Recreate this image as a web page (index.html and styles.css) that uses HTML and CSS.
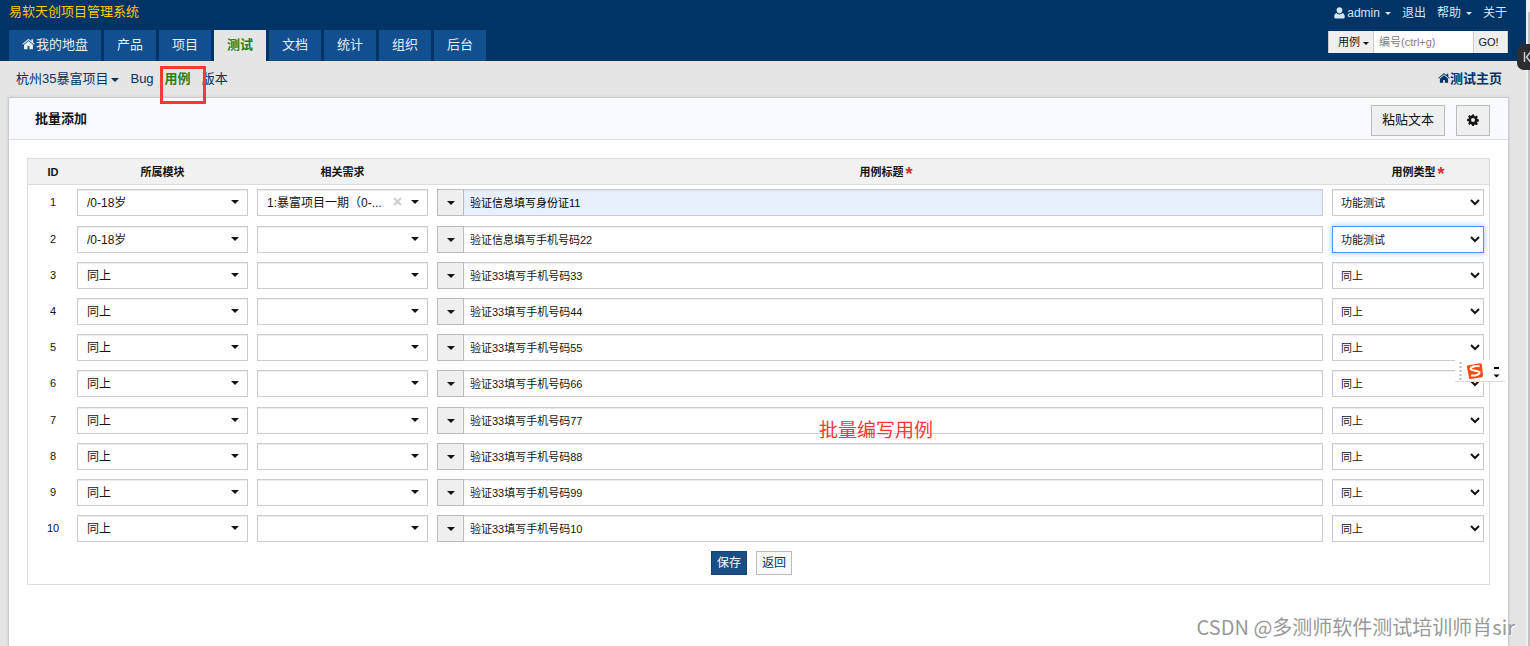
FILE: index.html
```
<!DOCTYPE html>
<html lang="zh-CN">
<head>
<meta charset="utf-8">
<title>批量添加</title>
<link rel="stylesheet" href="styles.css">
</head>
<body>
<svg width="0" height="0" class="defs" aria-hidden="true">
  <symbol id="home" viewBox="0 0 14 12"><path fill="currentColor" d="M7 2.8 2.2 6.8V11q0 .6.6.6H6V8.2h2v3.4h3.200q.6 0 .6-.6V6.800zM13.800 5.900 12 4.400V.9h-1.900v1.900L7.700.8Q7 .3 6.300.8L.2 5.900l.7.8L7 1.700l6.100 5z"/></symbol>
  <symbol id="user" viewBox="0 0 11 12"><path fill="currentColor" d="M5.500.3C3.700.3 2.600 1.600 2.600 3.300S3.900 6.600 5.500 6.600s2.900-1.600 2.900-3.300S7.300.3 5.500.3zM2.600 6C.8 6.400.2 8 .2 10q0 1.600 1.600 1.600h7.400q1.600 0 1.600-1.600c0-2-.6-3.600-2.400-4C7.700 7 6.700 7.400 5.500 7.400S3.300 7 2.600 6z"/></symbol>
  <symbol id="gear" viewBox="0 0 12 12"><path fill="currentColor" fill-rule="evenodd" d="M5 .5h2l.3 1.500.9.4 1.300-.9 1.400 1.400-.9 1.300.4.900 1.500.3v2l-1.500.3-.4.9.9 1.300-1.400 1.400-1.300-.9-.9.4L7 11.900H5l-.3-1.500-.9-.4-1.300.9-1.400-1.400.9-1.300-.4-.9L.1 7V5l1.500-.3.4-.9-.9-1.300 1.400-1.400 1.300.9.9-.4zM6 4.100a2 2 0 1 0 0 4 2 2 0 0 0 0-4z"/></symbol>
</svg>
<div class="page">
  <header class="header">
    <div class="topbar">
      <span class="brand">易软天创项目管理系统</span>
      <nav class="userlinks">
        <a href="#"><svg class="i-user"><use href="#user"/></svg>admin<i class="caret"></i></a>
        <a href="#">退出</a>
        <a href="#">帮助<i class="caret"></i></a>
        <a href="#">关于</a>
      </nav>
    </div>
    <div class="mainbar">
      <nav class="tabs">
        <a href="#" class="first"><svg class="i-home"><use href="#home"/></svg>我的地盘</a>
        <a href="#">产品</a>
        <a href="#">项目</a>
        <a href="#" class="active">测试</a>
        <a href="#">文档</a>
        <a href="#">统计</a>
        <a href="#">组织</a>
        <a href="#">后台</a>
      </nav>
      <form class="search">
        <button type="button" class="kind">用例<i class="caret"></i></button>
        <input type="text" placeholder="编号(ctrl+g)" aria-label="编号">
        <button type="button" class="go">GO!</button>
      </form>
    </div>
  </header>
  <div class="subnav">
    <nav class="modules">
      <a href="#">杭州35暴富项目<i class="caret"></i></a>
      <a href="#">Bug</a>
      <a href="#" class="active">用例<span class="mark"></span></a>
      <a href="#">版本</a>
    </nav>
    <a href="#" class="mainpage"><svg class="i-home"><use href="#home"/></svg>测试主页</a>
  </div>
  <main class="panel">
    <div class="heading">
      <h1>批量添加</h1>
      <div class="actions">
        <button type="button">粘贴文本</button>
        <button type="button" aria-label="设置"><svg class="i-gear"><use href="#gear"/></svg></button>
      </div>
    </div>
    <form class="body">
      <table class="cases">
        <colgroup><col class="c-id"><col class="c-pick"><col class="c-pick"><col><col class="c-type"></colgroup>
        <thead>
          <tr><th>ID</th><th>所属模块</th><th>相关需求</th><th>用例标题<b class="req">*</b></th><th>用例类型<b class="req">*</b></th></tr>
        </thead>
        <tbody>
          <tr><td>1</td>
            <td><div class="pick"><select aria-label="所属模块"><option>/0-18岁</option></select></div></td>
            <td><div class="pick"><select class="long" aria-label="相关需求"><option>1:暴富项目一期（0-...</option></select><button type="button" class="clear" aria-label="清除"><svg viewBox="0 0 9 9"><path d="M1 1l7 7M8 1l-7 7" stroke="#ccc" stroke-width="2"/></svg></button></div></td>
            <td><div class="title"><button type="button" aria-label="颜色"><i class="caret"></i></button><input class="filled" aria-label="用例标题" value="验证信息填写身份证11"></div></td>
            <td><select class="type" aria-label="用例类型"><option>功能测试</option></select></td></tr>
          <tr><td>2</td>
            <td><div class="pick"><select aria-label="所属模块"><option>/0-18岁</option></select></div></td>
            <td><div class="pick"><select aria-label="相关需求"><option></option></select></div></td>
            <td><div class="title"><button type="button" aria-label="颜色"><i class="caret"></i></button><input aria-label="用例标题" value="验证信息填写手机号码22"></div></td>
            <td><select class="type focus" aria-label="用例类型"><option>功能测试</option></select></td></tr>
          <tr><td>3</td>
            <td><div class="pick"><select aria-label="所属模块"><option>同上</option></select></div></td>
            <td><div class="pick"><select aria-label="相关需求"><option></option></select></div></td>
            <td><div class="title"><button type="button" aria-label="颜色"><i class="caret"></i></button><input aria-label="用例标题" value="验证33填写手机号码33"></div></td>
            <td><select class="type" aria-label="用例类型"><option>同上</option></select></td></tr>
          <tr><td>4</td>
            <td><div class="pick"><select aria-label="所属模块"><option>同上</option></select></div></td>
            <td><div class="pick"><select aria-label="相关需求"><option></option></select></div></td>
            <td><div class="title"><button type="button" aria-label="颜色"><i class="caret"></i></button><input aria-label="用例标题" value="验证33填写手机号码44"></div></td>
            <td><select class="type" aria-label="用例类型"><option>同上</option></select></td></tr>
          <tr><td>5</td>
            <td><div class="pick"><select aria-label="所属模块"><option>同上</option></select></div></td>
            <td><div class="pick"><select aria-label="相关需求"><option></option></select></div></td>
            <td><div class="title"><button type="button" aria-label="颜色"><i class="caret"></i></button><input aria-label="用例标题" value="验证33填写手机号码55"></div></td>
            <td><select class="type" aria-label="用例类型"><option>同上</option></select></td></tr>
          <tr><td>6</td>
            <td><div class="pick"><select aria-label="所属模块"><option>同上</option></select></div></td>
            <td><div class="pick"><select aria-label="相关需求"><option></option></select></div></td>
            <td><div class="title"><button type="button" aria-label="颜色"><i class="caret"></i></button><input aria-label="用例标题" value="验证33填写手机号码66"></div></td>
            <td><select class="type" aria-label="用例类型"><option>同上</option></select></td></tr>
          <tr><td>7</td>
            <td><div class="pick"><select aria-label="所属模块"><option>同上</option></select></div></td>
            <td><div class="pick"><select aria-label="相关需求"><option></option></select></div></td>
            <td><div class="title"><button type="button" aria-label="颜色"><i class="caret"></i></button><input aria-label="用例标题" value="验证33填写手机号码77"></div></td>
            <td><select class="type" aria-label="用例类型"><option>同上</option></select></td></tr>
          <tr><td>8</td>
            <td><div class="pick"><select aria-label="所属模块"><option>同上</option></select></div></td>
            <td><div class="pick"><select aria-label="相关需求"><option></option></select></div></td>
            <td><div class="title"><button type="button" aria-label="颜色"><i class="caret"></i></button><input aria-label="用例标题" value="验证33填写手机号码88"></div></td>
            <td><select class="type" aria-label="用例类型"><option>同上</option></select></td></tr>
          <tr><td>9</td>
            <td><div class="pick"><select aria-label="所属模块"><option>同上</option></select></div></td>
            <td><div class="pick"><select aria-label="相关需求"><option></option></select></div></td>
            <td><div class="title"><button type="button" aria-label="颜色"><i class="caret"></i></button><input aria-label="用例标题" value="验证33填写手机号码99"></div></td>
            <td><select class="type" aria-label="用例类型"><option>同上</option></select></td></tr>
          <tr><td>10</td>
            <td><div class="pick"><select aria-label="所属模块"><option>同上</option></select></div></td>
            <td><div class="pick"><select aria-label="相关需求"><option></option></select></div></td>
            <td><div class="title"><button type="button" aria-label="颜色"><i class="caret"></i></button><input aria-label="用例标题" value="验证33填写手机号码10"></div></td>
            <td><select class="type" aria-label="用例类型"><option>同上</option></select></td></tr>
        </tbody>
      </table>
      <div class="submit">
        <button type="button" class="primary">保存</button>
        <button type="button">返回</button>
      </div>
    </form>
  </main>
</div>
<div class="scroll"></div>
<button type="button" class="drawer" aria-label="展开"><svg viewBox="0 0 13 26"><path d="M7.500 8v10M13 8.500 9.500 13l3.500 4.500" fill="none" stroke="#ccc" stroke-width="1.500"/></svg></button>
<div class="note">批量编写用例</div>
<div class="ime">
  <svg viewBox="0 0 50 22"><path d="M5.500 2v20" stroke="#bbb" stroke-width="2" stroke-dasharray="2 2"/><path d="M12.500 5.500 25 3.200q1.500 0 1.800 1.300L28 15.500q0 1.500-1.400 1.800l-10.800 1.800q-1.500.1-1.800-1.400L12 7.200q-.2-1.400.5-1.700z" fill="#fb4b0a"/><path d="M24.600 6.300c-3.500-.7-9 .2-9 2.500 0 2.600 9 1.200 9 3.700 0 2.200-4.800 3.600-8.600 2.900" fill="none" stroke="#fff" stroke-width="2"/><path d="M39 7h5v2h-5zM38.500 14.500h6l-3 3z" fill="#000"/></svg>
</div>
<div class="watermark">CSDN @多测师软件测试培训师肖sir</div>
</body>
</html>
```
FILE: styles.css
```
* { box-sizing: border-box; }
body {
  margin: 0; min-height: 100vh; display: flex; position: relative; overflow: hidden;
  background: #e5e5e5; color: #141414;
  font: 12px/18px "Liberation Sans", "Noto Sans CJK SC", sans-serif;
}
button, input, select { font: inherit; color: inherit; margin: 0; border-radius: 0; }
a { color: #036; text-decoration: none; }
.defs { position: absolute; }
.page { flex: 1; min-width: 0; display: flex; flex-direction: column; }
.caret {
  display: inline-block; border: solid transparent; border-width: 4px 4px 0;
  border-top-color: currentColor; vertical-align: middle; margin-left: 4px;
}
.i-home { width: 13px; height: 12px; }
.i-user { width: 11px; height: 12px; margin-right: 2px; vertical-align: -2px; }
.i-gear { width: 12px; height: 12px; display: block; }

.header { background: #036; padding: 0 18px 0 9px; }
.topbar { display: flex; justify-content: space-between; height: 30px; padding-top: 3px; }
.brand { color: #fc0; font-size: 13px; }
.userlinks { display: flex; gap: 11px; margin-right: 1px; }
.userlinks a { color: #d5e5f4; line-height: 20px; }
.userlinks .caret { margin-left: 5px; border-width: 3px 3px 0; }
.mainbar { display: flex; justify-content: space-between; }
.tabs { display: flex; gap: 3px; }
.tabs a {
  background: #114f8e; color: #e6eef6; font-size: 13px; line-height: 29px; height: 31px;
  padding: 0 13px; display: flex;
}
.tabs .i-home { margin: 8px 1px 0 0; }
.tabs .active { background: #e5e5e5; color: #228222; font-weight: bold; }
.search { display: flex; height: 22px; margin-top: 1px; }
.search button { background: #efefef; border: 1px solid #ccc; border-width: 0 1px; padding: 0 6px 0 5px; }
.search .kind { width: 46px; font-size: 11px; padding-left: 9px; white-space: nowrap; }
.search .kind .caret { margin-left: 3px; border-width: 3px 3px 0; }
.search .go { width: 35px; font-size: 11px; padding: 0 4px 0 0; }
.search input { width: 99px; border: 0; padding: 0 5px; font-size: 11px; background: #fff; }
.search input::placeholder { color: #808080; }

.subnav { display: flex; justify-content: space-between; height: 36px; padding: 9px 24px 0 16px; font-size: 13px; }
.modules { display: flex; gap: 11px; }
.modules .caret { margin-left: 3px; }
.modules .active { color: #228222; font-weight: bold; position: relative; }
.mark { position: absolute; left: -5px; top: -4px; width: 46px; height: 38px; border: 3px solid #fb3838; z-index: 2; }
.mainpage { font-weight: bold; font-size: 13px; }
.mainpage .i-home { width: 12px; vertical-align: -1px; }

.panel { flex: 1; margin: 0 17px 0 8px; background: #fff; border: 1px solid #ccc; border-bottom: 0; box-shadow: 0 0 3px rgba(0,0,0,.12); }
.heading {
  display: flex; justify-content: space-between; height: 42px; padding: 7px 18px 0 26px;
  background: #f8faff; border-bottom: 1px solid #ddd;
}
.heading h1 { margin: 5px 0 0; font-size: 13px; line-height: 18px; }
.actions { display: flex; gap: 11px; }
.actions button { height: 31px; padding: 0 10px 2px; font-size: 13px; line-height: 26px; background: #efefef; border: 1px solid #bbb; }
.body { margin: 18px; border: 1px solid #ddd; }

.cases { width: 100%; table-layout: fixed; border-spacing: 0; font-size: 11px; }
.c-id { width: 45px; }
.c-pick { width: 180px; }
.c-type { width: 161px; }
.cases th { height: 26px; padding: 0 5px 0 4px; background: #f1f1f1; border-bottom: 1px solid #ddd; }
.cases th:first-child, .cases td:first-child { padding: 0 0 0 5px; text-align: center; }
.cases th:nth-child(4) { padding-left: 16px; }
.cases th:nth-child(5) { padding-left: 24px; }
.cases td { height: 36px; padding: 4px 5px 5px 4px; vertical-align: top; }
.cases td:first-child { line-height: 35px; }
.cases tr:nth-child(5n+1) td { height: 37px; }
.req { color: #d2322d; font-size: 18px; line-height: 12px; vertical-align: -4px; margin-left: 2px; }
.pick { position: relative; }
.pick::after {
  content: ""; position: absolute; right: 9px; top: 11px;
  border: solid transparent; border-width: 4px 4px 0; border-top-color: #141414;
}
.pick select {
  appearance: none; display: block; width: 100%; height: 27px; padding: 0 20px 0 9px;
  font-size: 12px; background: #fff; border: 1px solid #ccc; box-shadow: inset 0 1px 1px rgba(0,0,0,.08);
}
.clear { position: absolute; right: 26px; top: 8px; width: 9px; height: 9px; padding: 0; border: 0; background: none; }
.clear svg { display: block; }
.title { display: flex; height: 27px; }
.title button {
  width: 27px; padding: 0; background: #efefef; border: 1px solid #bbb;
  display: flex; align-items: center; justify-content: center;
}
.title .caret { margin: 0; }
.title input {
  flex: 1; min-width: 0; padding: 0 6px; background: #fff; border: 1px solid #ccc; border-left: 0;
  box-shadow: inset 0 1px 1px rgba(0,0,0,.08);
}
.title .filled { background: #e8f0fe; color: #000; }
.type {
  display: block; width: 100%; height: 27px; padding: 0 4px; background: #fff;
  border: 1px solid #ccc; box-shadow: inset 0 1px 1px rgba(0,0,0,.08);
}
.type.focus { border-color: #4d90fe; box-shadow: 0 0 6px rgba(77,144,254,.55); }
.submit { display: flex; justify-content: center; gap: 9px; padding: 4px 0 9px; margin-right: 14px; }
.submit button { width: 36px; height: 24px; padding: 0; color: #036; background: #f8f8f8; border: 1px solid #bbb; }
.submit .primary { color: #fff; background: #1a4f85; border-color: #164270; }

.scroll { width: 4px; margin-top: 12px; background: #c1c1c1; border-left: 2px solid #f0f0f0; box-shadow: 0 -12px #f0f0f0; }
.drawer { position: absolute; right: 0; top: 44px; width: 13px; height: 26px; padding: 0; border: 0; border-radius: 7px 0 0 7px; background: #2b2d30; }
.drawer svg { display: block; width: 13px; height: 26px; }
.note { position: absolute; left: 819px; top: 417px; font-size: 19px; line-height: 28px; color: #fb3838; }
.ime { position: absolute; right: 25px; top: 360px; width: 50px; height: 22px; background: #fff; border-bottom: 1px solid #ddd; }
.ime svg { display: block; width: 50px; height: 22px; }
.watermark {
  position: absolute; right: 15px; bottom: 4px; color: #999; text-shadow: 1px 1px #fff; white-space: nowrap;
  font: 20px/30px "Noto Sans CJK SC", sans-serif;
}
```
